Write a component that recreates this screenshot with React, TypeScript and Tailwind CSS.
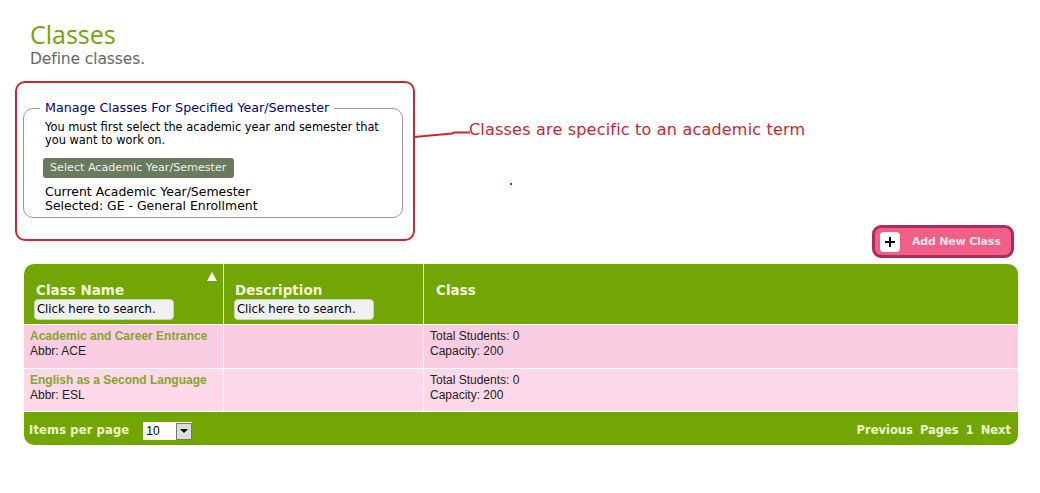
const Search = () => (
  <div className="w-[140px] h-[21px] rounded-[4px] bg-[#f0f0f0] border border-[#c9d3b8] pl-[2px] text-[11.6px] leading-[18px] text-black font-['DejaVu_Sans',sans-serif] font-normal whitespace-nowrap">
    Click here to search.
  </div>
);

const rows = [
  { name: "Academic and Career Entrance", abbr: "Abbr: ACE", bg: "bg-[#fbcde2]", h: "h-[44px]" },
  { name: "English as a Second Language", abbr: "Abbr: ESL", bg: "bg-[#fcd8e8]", h: "h-[43px]" },
];

export default function App() {
  return (
    <div className="w-[1040px] h-[493px] bg-white overflow-hidden relative font-['DejaVu_Sans',sans-serif]">
      <div className="pl-[30px] pt-[19px]">
        <div className="text-[25px] leading-[31px] text-[#72a607] font-['Open_Sans',sans-serif]">Classes</div>
        <div className="text-[15.5px] leading-[18px] text-[#666666] tracking-[-0.1px]">Define classes.</div>
      </div>

      <div className="flex items-start pl-[15px] mt-[13px] h-[159px]">
        <div className="w-[400px] h-[160px] shrink-0 border-2 border-[#d2232e] rounded-[10px] pl-[6px] pr-[10px] pt-[17px]">
          <fieldset className="h-[118px] border border-[#999999] rounded-[10px] pl-[21px] pr-[10px]">
            <legend className="px-[5px] ml-[-5px] pb-[2px] text-[12.7px] leading-[15px] text-[#000080] whitespace-nowrap">Manage Classes For Specified Year/Semester</legend>
            <p className="text-[11.4px] leading-[13px] text-black mt-[4px]">You must first select the academic year and semester that you want to work on.</p>
            <div className="mt-[11px] ml-[-2px] w-[191px] h-[20px] rounded-[3px] bg-[#6a7a5c] text-[#f0f0f0] text-[11.15px] leading-[19px] pl-[7px] whitespace-nowrap">Select Academic Year/Semester</div>
            <div className="mt-[7px] text-[12.45px] leading-[14px] text-black">
              Current Academic Year/Semester<br />Selected: GE - General Enrollment
            </div>
          </fieldset>
        </div>
        <svg width="56" height="8" viewBox="0 0 56 8" className="mt-[50px] shrink-0 ml-[-1px]">
          <path d="M0 6 L38 2.5 L40 1.5 L56 1.5" stroke="#d2232e" strokeWidth="2" fill="none" />
        </svg>
        <div className="mt-[39px] ml-[-1px] text-[16px] leading-[20px] text-[#d2232e] tracking-[0.2px] whitespace-nowrap">Classes are specific to an academic term</div>
      </div>
      <div className="absolute left-[510px] top-[183px] w-[2px] h-[2px] bg-[#d2232e]" />

      <div className="flex justify-end pr-[26px] mt-[-15px]">
        <div className="w-[142px] h-[33px] rounded-[9px] border-[3px] border-[#b02c58] bg-[#ef5f87] flex items-center pl-[5px]">
          <span className="w-[20px] h-[20px] rounded-[4px] bg-white flex items-center justify-center">
            <svg width="10" height="10" viewBox="0 0 10 10"><path d="M5 0V10M0 5H10" stroke="#000" strokeWidth="2" /></svg>
          </span>
          <span className="ml-[12px] mt-[1px] text-[11px] font-bold text-[#fde4ec] tracking-[-0.2px] whitespace-nowrap">Add New Class</span>
        </div>
      </div>

      <div className="mx-[24px] mt-[6px] w-[994px]">
        <div className="grid grid-cols-[200px_200px_1fr] h-[60px] bg-[#72a604] rounded-t-[10px] text-[#f4f9dc] font-bold text-[13.5px] leading-[18px]">
          <div className="relative border-r border-white pl-[10px] pt-[17px]">
            <span className="absolute right-[6px] top-[8px] w-0 h-0 border-x-[5px] border-x-transparent border-b-[9px] border-b-white" />
            <div className="pl-[2px]">Class Name</div>
            <Search />
          </div>
          <div className="border-r border-white pl-[10px] pt-[17px]">
            <div className="pl-[1px]">Description</div>
            <Search />
          </div>
          <div className="pl-[12px] pt-[17px]">Class</div>
        </div>
        {rows.map((r) => (
          <div key={r.name} className={`grid grid-cols-[200px_200px_1fr] ${r.h} border-t border-white text-[12px] leading-[15px] font-['Liberation_Sans',sans-serif] text-[#222] ${r.bg}`}>
            <div className="border-r border-white pl-[6px] pt-[4px]">
              <div className="font-bold text-[#86a52c]">{r.name}</div>
              <div>{r.abbr}</div>
            </div>
            <div className="border-r border-white" />
            <div className="pl-[6px] pt-[4px]">
              <div>Total Students: 0</div>
              <div>Capacity: 200</div>
            </div>
          </div>
        ))}
        <div className="h-[34px] border-t border-white bg-[#72a604] rounded-b-[10px] flex items-center justify-between pl-[5px] pr-[7px] pt-[5px] text-[11.5px] font-bold text-[#eef6cf]">
          <div className="flex items-center">
            <span className="tracking-[0.15px]">Items per page</span>
            <div className="ml-[14px] w-[49px] h-[18px] bg-white flex items-center justify-between">
              <span className="pl-[3px] text-[12px] font-normal text-black font-['Liberation_Sans',sans-serif]">10</span>
              <span className="w-[16px] h-[17px] bg-[#dcdcdc] border border-[#777] flex items-center justify-center">
                <span className="w-0 h-0 border-x-[4px] border-x-transparent border-t-[4px] border-t-black" />
              </span>
            </div>
          </div>
          <div className="flex gap-[7px]">
            <span>Previous</span><span>Pages</span><span>1</span><span>Next</span>
          </div>
        </div>
      </div>
    </div>
  );
}
